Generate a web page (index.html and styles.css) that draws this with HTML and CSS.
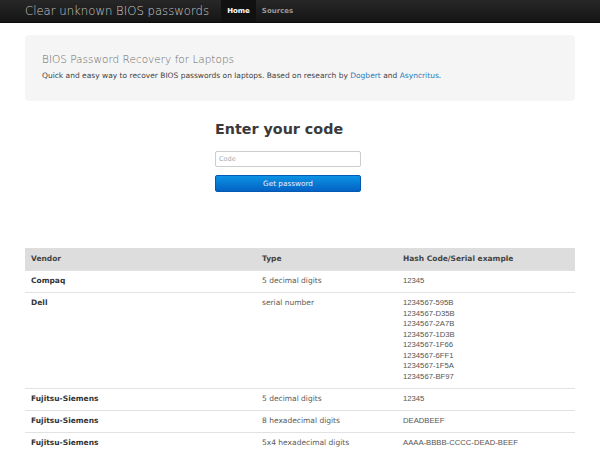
FILE: index.html
```html
<!DOCTYPE html>
<html>
<head>
<meta charset="utf-8">
<title>Clear unknown BIOS passwords</title>
<link rel="stylesheet" href="styles.css">
</head>
<body>
<div class="navbar">
  <div class="container nav-inner">
    <a class="brand">Clear unknown BIOS passwords</a>
    <ul class="nav">
      <li class="active"><a>Home</a></li>
      <li><a>Sources</a></li>
    </ul>
  </div>
</div>
<div class="container">
  <div class="hero">
    <h1 class="hero-title">BIOS Password Recovery for Laptops</h1>
    <p class="hero-text">Quick and easy way to recover BIOS passwords on laptops. Based on research by <a class="link">Dogbert</a> and <a class="link">Asyncritus</a>.</p>
  </div>
  <div class="form-area">
    <h2 class="form-title">Enter your code</h2>
    <input class="code-input" type="text" placeholder="Code">
    <button class="btn">Get password</button>
  </div>
  <table class="codes">
    <thead>
      <tr><th class="c1">Vendor</th><th class="c2">Type</th><th class="c3">Hash Code/Serial example</th></tr>
    </thead>
    <tbody>
      <tr><td class="vendor">Compaq</td><td class="type">5 decimal digits</td><td class="hash">12345</td></tr>
      <tr><td class="vendor">Dell</td><td class="type">serial number</td><td class="hash">1234567-595B<br>1234567-D35B<br>1234567-2A7B<br>1234567-1D3B<br>1234567-1F66<br>1234567-6FF1<br>1234567-1F5A<br>1234567-BF97</td></tr>
      <tr><td class="vendor">Fujitsu-Siemens</td><td class="type">5 decimal digits</td><td class="hash">12345</td></tr>
      <tr><td class="vendor">Fujitsu-Siemens</td><td class="type">8 hexadecimal digits</td><td class="hash">DEADBEEF</td></tr>
      <tr><td class="vendor">Fujitsu-Siemens</td><td class="type">5x4 hexadecimal digits</td><td class="hash">AAAA-BBBB-CCCC-DEAD-BEEF</td></tr>
    </tbody>
  </table>
</div>
</body>
</html>
```
FILE: styles.css
```css
html, body {
  margin: 0;
  padding: 0;
  background: #ffffff;
  font-family: "DejaVu Sans", sans-serif;
  color: #333333;
}

.container {
  width: 550px;
  margin: 0 auto;
}

.navbar {
  height: 23px;
  background: linear-gradient(#272727, #151515);
  border-bottom: 1px solid #0c0c0c;
  box-sizing: border-box;
}

.nav-inner {
  display: flex;
  align-items: stretch;
  height: 22px;
}

.brand {
  font-size: 11.7px;
  font-weight: 200;
  color: #c8c8c8;
  line-height: 22px;
  margin-right: 12px;
}

.nav {
  display: flex;
  list-style: none;
  margin: 0;
  padding: 0;
}

.nav li a {
  display: block;
  padding: 0 6px;
  font-size: 7px;
  font-weight: bold;
  line-height: 22px;
  color: #9a9a9a;
}

.nav li.active a {
  background: #111111;
  color: #ffffff;
}

.hero {
  margin-top: 12px;
  background: #f5f5f5;
  border-radius: 4px;
  padding: 17px 17px 17px;
  height: 66px;
  box-sizing: border-box;
}

.hero-title {
  margin: 0;
  font-size: 10.5px;
  font-weight: 200;
  color: #6a6a6a;
  line-height: 14px;
}

.hero-text {
  margin: 5px 0 0;
  font-size: 7.5px;
  line-height: 10.5px;
  color: #444444;
}

.link {
  color: #2b7ab8;
}

.form-area {
  display: flex;
  flex-direction: column;
  align-items: flex-start;
  padding-left: 190px;
  margin-top: 18px;
  height: 129px;
}

.form-title {
  margin: 0;
  font-size: 14.3px;
  font-weight: bold;
  color: #3a3a3a;
  line-height: 20px;
}

.code-input {
  margin-top: 12px;
  width: 146px;
  height: 16px;
  box-sizing: border-box;
  border: 1px solid #cccccc;
  border-radius: 2px;
  padding: 0 3px;
  font-family: "DejaVu Sans", sans-serif;
  font-size: 6.5px;
  color: #555555;
  background: #ffffff;
  outline: none;
}

.code-input::placeholder {
  color: #aaaaaa;
}

.btn {
  margin-top: 8px;
  width: 146px;
  height: 17px;
  border: 1px solid #0459b0;
  border-radius: 2px;
  background: linear-gradient(#0c93e4, #0462c4);
  color: #e8f2ff;
  font-family: "DejaVu Sans", sans-serif;
  font-size: 7.3px;
  padding: 0;
}

.codes {
  width: 550px;
  border-collapse: collapse;
  font-size: 7.5px;
  line-height: 10.5px;
}

.codes th, .codes td {
  text-align: left;
  vertical-align: top;
  padding: 5.25px 6px;
}

.codes th {
  background: #dddddd;
  font-weight: bold;
  color: #444444;
  padding-top: 5.75px;
  padding-bottom: 5.75px;
}

.codes td {
  border-top: 1px solid #e2e2e2;
}

.c1 { width: 219px; }
.c2 { width: 129px; }

.vendor {
  font-weight: bold;
  color: #333333;
}

.type {
  color: #5a5a5a;
}

.hash {
  font-family: "Liberation Sans", Arial, sans-serif;
  font-size: 7.7px;
  color: #555555;
}
```
